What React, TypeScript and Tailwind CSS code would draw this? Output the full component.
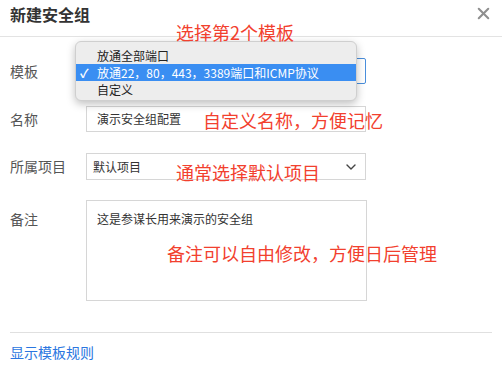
import React from 'react';
import { X } from 'lucide-react';

const FONT = { fontFamily: '"Noto Sans CJK SC", "Noto Sans", sans-serif' };

const Chevron = () => (
  <svg width="10" height="6" viewBox="0 0 10 6" className="text-[#444]">
    <path d="M1 1l4 4 4-4" fill="none" stroke="currentColor" strokeWidth="1.4" strokeLinecap="round" strokeLinejoin="round" />
  </svg>
);

const Note = ({ className, children }: { className: string; children: React.ReactNode }) => (
  <div className={`absolute text-[18px] leading-[18px] text-[#f2402e] whitespace-nowrap ${className}`}>{children}</div>
);

export default function App() {
  return (
    <div className="relative w-[502px] h-[372px] bg-white overflow-hidden" style={FONT}>
      {/* Header */}
      <div className="h-[37px] border-b border-[#e3e3e3] px-[10px] pt-[1px]">
        <div className="h-[26px] flex items-center justify-between">
          <h1 className="text-[16px] font-bold text-[#333]">新建安全组</h1>
          <X size={19} strokeWidth={2.6} className="text-[#8f8f8f] -mr-[1px] -mt-[1px]" />
        </div>
      </div>

      {/* Form */}
      <div className="px-[10px] pt-[21px]">
        <div className="flex items-center h-[26px]">
          <label className="w-[76px] text-[14px] text-[#555]">模板</label>
          <div className="w-[280px] h-[26px] border border-[#4a8fdc] rounded-[2px] flex items-center justify-end pr-[9px]">
            <Chevron />
          </div>
        </div>

        <div className="flex items-center h-[26px] mt-[22px]">
          <label className="w-[76px] text-[14px] text-[#555]">名称</label>
          <div className="w-[280px] h-[26px] border border-[#d6d6d6] flex items-center pl-[10px] text-[12px] text-[#333]">
            演示安全组配置
          </div>
        </div>

        <div className="flex items-center h-[27px] mt-[21px]">
          <label className="w-[76px] text-[14px] text-[#555]">所属项目</label>
          <div className="w-[280px] h-[27px] border border-[#d6d6d6] flex items-center justify-between pl-[6px] pr-[9px] text-[12px] text-[#333]">
            <span>默认项目</span>
            <Chevron />
          </div>
        </div>

        <div className="flex items-start mt-[20px]">
          <label className="w-[76px] text-[14px] text-[#555] pt-[9px]">备注</label>
          <div className="w-[281px] h-[101px] border border-[#d6d6d6] px-[10px] pt-[9px] text-[12px] text-[#333]">
            这是参谋长用来演示的安全组
          </div>
        </div>

        <div className="mt-[31px] border-t border-[#e0e0e0]" />
        <div className="pt-[9px] text-[14px] text-[#2a76e0]">显示模板规则</div>
      </div>

      {/* Native select menu */}
      <div className="absolute left-[75px] top-[41px] w-[282px] h-[60px] bg-[#ededed] border border-[#cfcfcf] rounded-[6px] shadow-[0_3px_8px_rgba(0,0,0,0.25)] pt-[5px] text-[12px] leading-[17px] text-[#222]">
        <div className="h-[17px] pl-[21px]">放通全部端口</div>
        <div className="h-[17px] pl-[4px] bg-[#3a8ef2] text-white flex">
          <span className="w-[17px] font-bold">✓</span>
          <span>放通22，80，443，3389端口和ICMP协议</span>
        </div>
        <div className="h-[17px] pl-[21px]">自定义</div>
      </div>

      {/* Annotations */}
      <Note className="left-[176px] top-[23px]">选择第2个模板</Note>
      <Note className="left-[203px] top-[111px]">自定义名称，方便记忆</Note>
      <Note className="left-[176px] top-[163px]">通常选择默认项目</Note>
      <Note className="left-[167px] top-[244px]">备注可以自由修改，方便日后管理</Note>
    </div>
  );
}
